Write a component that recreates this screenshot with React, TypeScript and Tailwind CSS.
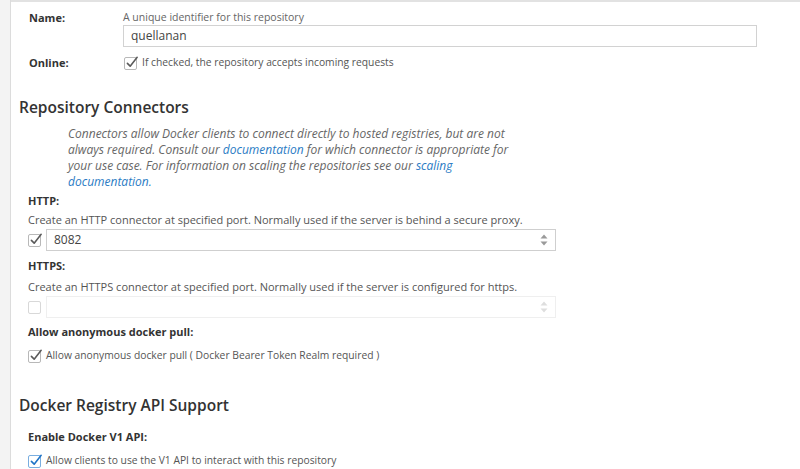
import React from "react";

function Check({ on, blue, disabled }: { on?: boolean; blue?: boolean; disabled?: boolean }) {
  const border = blue ? "border-[#7aaee0]" : disabled ? "border-[#d8d8d8]" : "border-[#b8b8b8]";
  return (
    <span className={`relative inline-block w-[13px] h-[13px] shrink-0 rounded-[2px] border bg-white ${border}`}>
      {on && (
        <svg
          viewBox="0 0 14 14"
          className="absolute left-[1px] top-[-3px] w-[13px] h-[14px]"
          fill="none"
          stroke={blue ? "#1f73c6" : "#5a5a5a"}
          strokeWidth="1.7"
          strokeLinecap="round"
          strokeLinejoin="round"
        >
          <path d="M1.5 8.5 L4.5 11.5 L12 2" />
        </svg>
      )}
    </span>
  );
}

function Spinner({ disabled }: { disabled?: boolean }) {
  const c = disabled ? "#dedede" : "#9a9a9a";
  return (
    <svg viewBox="0 0 8 12" className="w-[8px] h-[12px]">
      <path d="M4 0.5 L7.5 4.5 L0.5 4.5 Z" fill={c} />
      <path d="M4 11.5 L7.5 7.5 L0.5 7.5 Z" fill={c} />
    </svg>
  );
}

function PortField({ value, on, disabled }: { value?: string; on?: boolean; disabled?: boolean }) {
  return (
    <div className="flex items-center mt-[2px]">
      <Check on={on} disabled={disabled} />
      <div
        className={`ml-[5px] w-[510px] h-[22px] flex items-center justify-between px-[7px] border ${
          disabled ? "border-[#efefef]" : "border-[#cfcfcf]"
        }`}
      >
        <span className="text-[12px] text-[#444]">{value}</span>
        <Spinner disabled={disabled} />
      </div>
    </div>
  );
}

export default function App() {
  return (
    <div
      className="flex h-[469px] overflow-hidden bg-[#f3f3f3] text-[#333]"
      style={{ fontFamily: "'Open Sans', Lato, sans-serif" }}
    >
      <div className="w-[11px] shrink-0 border-r border-[#dcdcdc]" />
      <div className="flex-1 bg-white border-t-2 border-[#e2e2e2] pl-[8px] pt-[8px]">
        <div className="pl-[10px]">
          <div className="flex">
            <div className="w-[94px] pt-[1px] text-[11px] leading-[14px] font-bold text-[#333]">Name:</div>
            <div className="w-[634px]">
              <div className="text-[10.5px] leading-[14px] text-[#666]">A unique identifier for this repository</div>
              <div className="mt-[1px] h-[22px] border border-[#d2d2d2] px-[7px] flex items-center text-[12px] text-[#444]">
                quellanan
              </div>
            </div>
          </div>
          <div className="flex items-center mt-[9px] h-[14px]">
            <div className="w-[95px] text-[11px] font-bold text-[#333]">Online:</div>
            <Check on />
            <span className="ml-[5px] text-[10.3px] text-[#555]">If checked, the repository accepts incoming requests</span>
          </div>
        </div>

        <h2 className="mt-[27px] text-[15.5px] leading-[20px] font-semibold text-[#333]">Repository Connectors</h2>
        <p className="mt-[9px] ml-[49px] text-[12px] leading-[16px] italic text-[#666]">
          <span className="block">Connectors allow Docker clients to connect directly to hosted registries, but are not</span>
          <span className="block">
            always required. Consult our <span className="text-[#2a7bc4]">documentation</span> for which connector is appropriate for
          </span>
          <span className="block">
            your use case. For information on scaling the repositories see our <span className="text-[#2a7bc4]">scaling</span>
          </span>
          <span className="block text-[#2a7bc4]">documentation.</span>
        </p>

        <div className="pl-[9px]">
          <div className="mt-[4px] text-[11px] leading-[14px] font-bold">HTTP:</div>
          <div className="mt-[5px] text-[11px] leading-[14px] text-[#555]">
            Create an HTTP connector at specified port. Normally used if the server is behind a secure proxy.
          </div>
          <PortField on value="8082" />

          <div className="mt-[8px] text-[11px] leading-[14px] font-bold">HTTPS:</div>
          <div className="mt-[7px] text-[11px] leading-[14px] text-[#555]">
            Create an HTTPS connector at specified port. Normally used if the server is configured for https.
          </div>
          <PortField disabled />

          <div className="mt-[7px] text-[11px] leading-[14px] font-bold">Allow anonymous docker pull:</div>
          <div className="mt-[10px] h-[14px] flex items-center">
            <Check on />
            <span className="ml-[5px] text-[10.3px] text-[#555]">Allow anonymous docker pull ( Docker Bearer Token Realm required )</span>
          </div>
        </div>

        <h2 className="mt-[32px] text-[15.5px] leading-[20px] font-semibold text-[#333]">Docker Registry API Support</h2>
        <div className="pl-[9px]">
          <div className="mt-[15px] text-[11px] leading-[14px] font-bold">Enable Docker V1 API:</div>
          <div className="mt-[10px] h-[14px] flex items-center">
            <Check on blue />
            <span className="ml-[5px] text-[10.3px] text-[#555]">Allow clients to use the V1 API to interact with this repository</span>
          </div>
        </div>
      </div>
    </div>
  );
}
